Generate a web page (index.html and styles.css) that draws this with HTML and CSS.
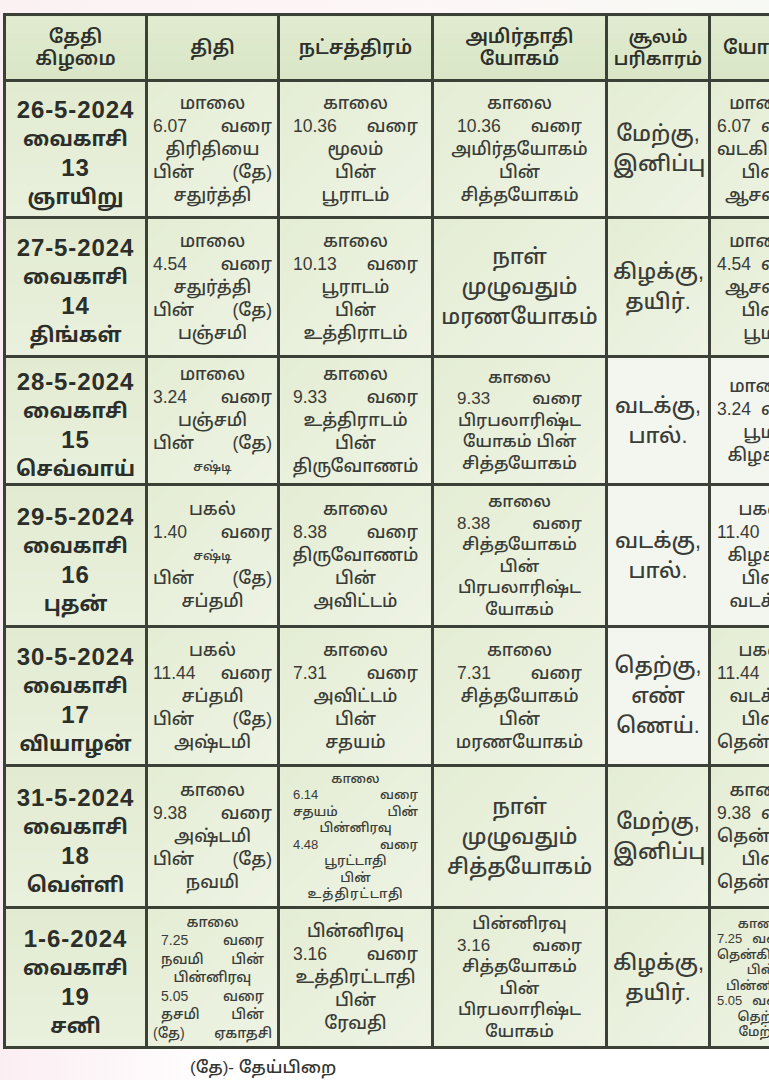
FILE: index.html
```html
<!DOCTYPE html>
<html lang="ta">
<head>
<meta charset="utf-8">
<link rel="stylesheet" href="styles.css">
</head>
<body>
<div class="page">
  <div class="topband"></div>
  <table class="cal">
    <colgroup>
      <col class="c1"><col class="c2"><col class="c3"><col class="c4"><col class="c5"><col class="c6">
    </colgroup>
    <thead>
      <tr class="h">
        <th><div>தேதி</div><div>கிழமை</div></th>
        <th>திதி</th>
        <th>நட்சத்திரம்</th>
        <th><div>அமிர்தாதி</div><div>யோகம்</div></th>
        <th class="tight"><div>சூலம்</div><div>பரிகாரம்</div></th>
        <th class="last">யோகம்</th>
      </tr>
    </thead>
    <tbody>
      <tr class="r1">
        <td class="date"><div class="d">26-5-2024</div><div>வைகாசி</div><div class="d">13</div><div>ஞாயிறு</div></td>
        <td><div>மாலை</div><div class="sp"><span>6.07</span><span>வரை</span></div><div>திரிதியை</div><div class="sp"><span>பின்</span><span>(தே)</span></div><div>சதுர்த்தி</div></td>
        <td><div>காலை</div><div class="sp in"><span>10.36</span><span>வரை</span></div><div>மூலம்</div><div>பின்</div><div>பூராடம்</div></td>
        <td><div>காலை</div><div class="sp in2"><span>10.36</span><span>வரை</span></div><div>அமிர்தயோகம்</div><div>பின்</div><div>சித்தயோகம்</div></td>
        <td class="big"><div>மேற்கு,</div><div>இனிப்பு</div></td>
        <td class="cut"><div>மாலை</div><div class="sp"><span>6.07</span><span>வரை</span></div><div>வடகிழக்கு</div><div>பின்</div><div>ஆசனம்</div></td>
      </tr>
      <tr class="r2">
        <td class="date"><div class="d">27-5-2024</div><div>வைகாசி</div><div class="d">14</div><div>திங்கள்</div></td>
        <td><div>மாலை</div><div class="sp"><span>4.54</span><span>வரை</span></div><div>சதுர்த்தி</div><div class="sp"><span>பின்</span><span>(தே)</span></div><div>பஞ்சமி</div></td>
        <td><div>காலை</div><div class="sp in"><span>10.13</span><span>வரை</span></div><div>பூராடம்</div><div>பின்</div><div>உத்திராடம்</div></td>
        <td class="big"><div>நாள்</div><div>முழுவதும்</div><div>மரணயோகம்</div></td>
        <td class="big"><div>கிழக்கு,</div><div>தயிர்.</div></td>
        <td class="cut"><div>மாலை</div><div class="sp"><span>4.54</span><span>வரை</span></div><div>ஆசனம்</div><div>பின்</div><div>பூமி</div></td>
      </tr>
      <tr class="r3">
        <td class="date"><div class="d">28-5-2024</div><div>வைகாசி</div><div class="d">15</div><div>செவ்வாய்</div></td>
        <td><div>மாலை</div><div class="sp"><span>3.24</span><span>வரை</span></div><div>பஞ்சமி</div><div class="sp"><span>பின்</span><span>(தே)</span></div><div class="sm">சஷ்டி</div></td>
        <td><div>காலை</div><div class="sp in"><span>9.33</span><span>வரை</span></div><div>உத்திராடம்</div><div>பின்</div><div>திருவோணம்</div></td>
        <td class="mid"><div>காலை</div><div class="sp in2"><span>9.33</span><span>வரை</span></div><div>பிரபலாரிஷ்ட</div><div>யோகம் பின்</div><div>சித்தயோகம்</div></td>
        <td class="big white"><div>வடக்கு,</div><div>பால்.</div></td>
        <td class="cut white"><div>மாலை</div><div class="sp"><span>3.24</span><span>வரை</span></div><div>பூமி</div><div>கிழக்கு</div></td>
      </tr>
      <tr class="r4">
        <td class="date"><div class="d">29-5-2024</div><div>வைகாசி</div><div class="d">16</div><div>புதன்</div></td>
        <td><div>பகல்</div><div class="sp"><span>1.40</span><span>வரை</span></div><div class="sm">சஷ்டி</div><div class="sp"><span>பின்</span><span>(தே)</span></div><div>சப்தமி</div></td>
        <td><div>காலை</div><div class="sp in"><span>8.38</span><span>வரை</span></div><div>திருவோணம்</div><div>பின்</div><div>அவிட்டம்</div></td>
        <td class="mid"><div>காலை</div><div class="sp in2"><span>8.38</span><span>வரை</span></div><div>சித்தயோகம்</div><div>பின்</div><div>பிரபலாரிஷ்ட</div><div>யோகம்</div></td>
        <td class="big white"><div>வடக்கு,</div><div>பால்.</div></td>
        <td class="cut white"><div>பகல்</div><div class="sp"><span>11.40</span><span>வரை</span></div><div>கிழக்கு</div><div>பின்</div><div>வடக்கு</div></td>
      </tr>
      <tr class="r5">
        <td class="date"><div class="d">30-5-2024</div><div>வைகாசி</div><div class="d">17</div><div>வியாழன்</div></td>
        <td><div>பகல்</div><div class="sp"><span>11.44</span><span>வரை</span></div><div>சப்தமி</div><div class="sp"><span>பின்</span><span>(தே)</span></div><div>அஷ்டமி</div></td>
        <td><div>காலை</div><div class="sp in"><span>7.31</span><span>வரை</span></div><div>அவிட்டம்</div><div>பின்</div><div>சதயம்</div></td>
        <td><div>காலை</div><div class="sp in2"><span>7.31</span><span>வரை</span></div><div>சித்தயோகம்</div><div>பின்</div><div>மரணயோகம்</div></td>
        <td class="big white"><div>தெற்கு,</div><div>எண்</div><div>ணெய்.</div></td>
        <td class="cut"><div>பகல்</div><div class="sp"><span>11.44</span><span>வரை</span></div><div>வடக்கு</div><div>பின்</div><div>தென்கிழக்கு</div></td>
      </tr>
      <tr class="r6">
        <td class="date"><div class="d">31-5-2024</div><div>வைகாசி</div><div class="d">18</div><div>வெள்ளி</div></td>
        <td><div>காலை</div><div class="sp"><span>9.38</span><span>வரை</span></div><div>அஷ்டமி</div><div class="sp"><span>பின்</span><span>(தே)</span></div><div>நவமி</div></td>
        <td class="tiny"><div>காலை</div><div class="sp in"><span>6.14</span><span>வரை</span></div><div class="sp in"><span>சதயம்</span><span>பின்</span></div><div>பின்னிரவு</div><div class="sp in"><span>4.48</span><span>வரை</span></div><div>பூரட்டாதி</div><div>பின்</div><div class="wide">உத்திரட்டாதி</div></td>
        <td class="big"><div>நாள்</div><div>முழுவதும்</div><div>சித்தயோகம்</div></td>
        <td class="big"><div>மேற்கு,</div><div>இனிப்பு</div></td>
        <td class="cut"><div>காலை</div><div class="sp"><span>9.38</span><span>வரை</span></div><div>தென்கிழக்கு</div><div>பின்</div><div>தென்மேற்கு</div></td>
      </tr>
      <tr class="r7">
        <td class="date"><div class="d">1-6-2024</div><div>வைகாசி</div><div class="d">19</div><div>சனி</div></td>
        <td class="small"><div>காலை</div><div class="sp in"><span>7.25</span><span>வரை</span></div><div class="sp in"><span>நவமி</span><span>பின்</span></div><div>பின்னிரவு</div><div class="sp in"><span>5.05</span><span>வரை</span></div><div class="sp in"><span>தசமி</span><span>பின்</span></div><div class="sp"><span>(தே)</span><span>ஏகாதசி</span></div></td>
        <td><div>பின்னிரவு</div><div class="sp in"><span>3.16</span><span>வரை</span></div><div>உத்திரட்டாதி</div><div>பின்</div><div>ரேவதி</div></td>
        <td class="mid"><div>பின்னிரவு</div><div class="sp in2"><span>3.16</span><span>வரை</span></div><div>சித்தயோகம்</div><div>பின்</div><div>பிரபலாரிஷ்ட</div><div>யோகம்</div></td>
        <td class="big"><div>கிழக்கு,</div><div>தயிர்.</div></td>
        <td class="cut tinycut"><div>காலை</div><div class="sp"><span>7.25</span><span>வரை</span></div><div>தென்கிழக்கு</div><div>பின்</div><div>பின்னிரவு</div><div class="sp"><span>5.05</span><span>வரை</span></div><div>தெற்கு</div><div>மேற்கு</div></td>
      </tr>
    </tbody>
  </table>
  <div class="foot">(தே)- தேய்பிறை</div>
</div>
</body>
</html>
```
FILE: styles.css
```css
html, body {
  margin: 0;
  padding: 0;
  background: #ffffff;
  overflow: hidden;
}
.page {
  width: 769px;
  height: 1080px;
  overflow: hidden;
  position: relative;
  background: linear-gradient(90deg, #fbeef2 0%, #ffffff 30%, #ffffff 100%);
  font-family: "Liberation Sans", "Noto Sans Tamil", "Lohit Tamil", "Noto Sans", sans-serif;
  color: #3a3c37;
}
.topband {
  height: 13px;
  background: linear-gradient(90deg, #fbf1f3, #fdf6f7 50%, #f7f9f4);
}
.cal {
  border-collapse: collapse;
  table-layout: fixed;
  width: 808px;
  margin-left: 3px;
  background: #e7efd9;
}
.c1 { width: 142px; }
.c2 { width: 132px; }
.c3 { width: 154px; }
.c4 { width: 174px; }
.c5 { width: 103px; }
.c6 { width: 103px; }
.cal th, .cal td {
  border: 3px solid #3b4136;
  text-align: center;
  vertical-align: middle;
  padding: 0 5px;
  overflow: hidden;
}
.cal th {
  font-weight: 600;
  font-size: 19px;
  line-height: 22px;
  background: linear-gradient(180deg, #e1ebd0, #d9e6c6);
  color: #2e302b;
}
.cal th.tight { padding: 0 2px; font-size: 18px; }
.cal th.last { white-space: nowrap; padding: 0 4px 0 12px; text-align: left; }
.h { height: 66px; }
.r1 { height: 137px; }
.r2 { height: 139px; }
.r3 { height: 128px; }
.r4 { height: 142px; }
.r5 { height: 139px; }
.r6 { height: 142px; }
.r7 { height: 140px; }
.cal td {
  font-size: 17.5px;
  font-weight: 500;
  line-height: 23px;
  background: linear-gradient(135deg, #e4edd4, #eef3e4);
}
.cal td.date {
  font-weight: 700;
  font-size: 20.5px;
  line-height: 29px;
  padding: 8px 0 0;
  color: #2c2e29;
  background: linear-gradient(180deg, #e2ebd1, #e9f0dd);
}
.cal td.date .d {
  font-size: 24px;
  letter-spacing: 0.9px;
}
.cal td.big {
  font-size: 21.5px;
  line-height: 30px;
}
.cal td.mid {
  font-size: 17px;
  line-height: 21.5px;
}
.cal td.tiny {
  font-size: 13px;
  line-height: 16.5px;
}
.cal td.tiny .wide { letter-spacing: 1px; white-space: nowrap; }
.cal td.small {
  font-size: 14px;
  line-height: 18.5px;
}
.cal td.white {
  background: #f3f6ee;
}
.cal td.cut {
  padding: 0 4px 0 6px;
}
.cal td.cut div { white-space: nowrap; }
.cal td.cut .sp { gap: 10px; justify-content: flex-start; }
.cal td.tinycut {
  font-size: 13px;
  line-height: 15.5px;
}
.sp {
  display: flex;
  justify-content: space-between;
}
.sp.in { padding: 0 8px; }
.sp.in2 { padding: 0 18px; }
.sm { font-size: 13px; }
.foot {
  padding: 9px 0 0 190px;
  font-size: 17px;
  font-weight: 500;
  color: #333530;
}
```
